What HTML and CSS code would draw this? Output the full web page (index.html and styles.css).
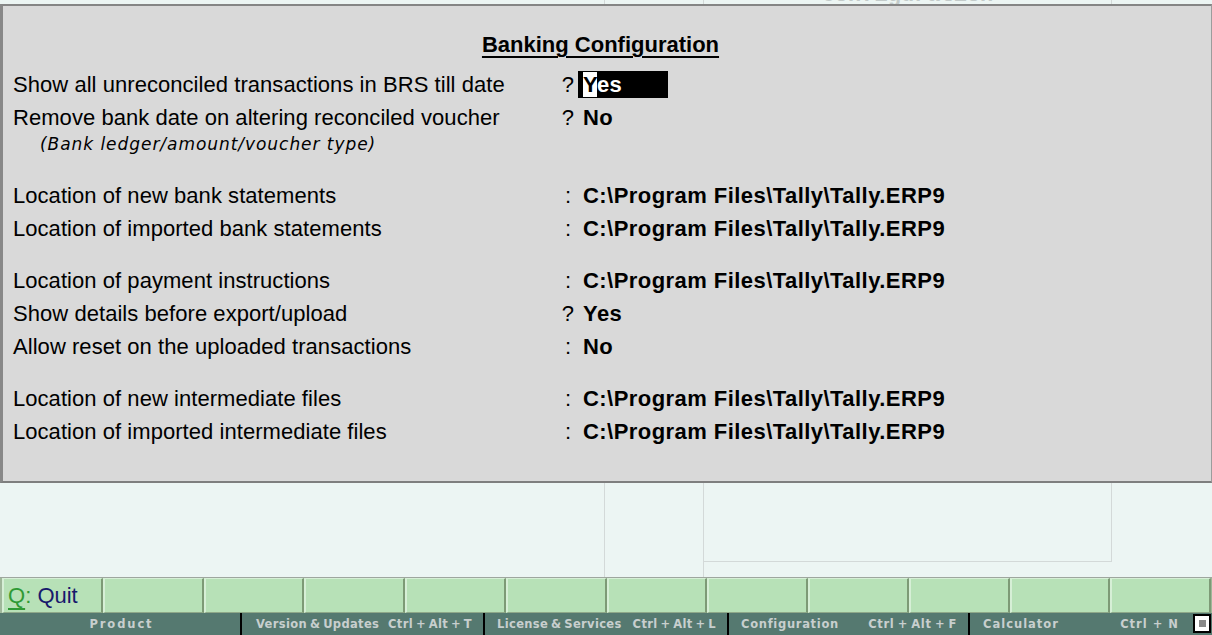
FILE: index.html
```html
<!DOCTYPE html>
<html lang="en">
<head>
<meta charset="utf-8">
<title>Banking Configuration</title>
<link rel="stylesheet" href="styles.css">
</head>
<body>
<div class="screen">
  <div class="bg-strip">
    <div class="bg-col bg-col-a"></div>
    <div class="bg-col bg-col-b"></div>
    <div class="bg-col bg-col-c"><span class="ghost-title">Configuration</span></div>
    <div class="bg-col bg-col-d"></div>
  </div>

  <div class="panel">
    <h1 class="panel-title"><span>Banking Configuration</span></h1>

    <div class="group group-first">
      <div class="row"><span class="label">Show all unreconciled transactions in BRS till date</span><span class="sep">?</span><span class="value"><span class="active"><span class="cursor">Y</span>es</span></span></div>
      <div class="row"><span class="label">Remove bank date on altering reconciled voucher</span><span class="sep">?</span><span class="value"><span>No</span></span></div>
      <div class="note">(Bank ledger/amount/voucher type)</div>
    </div>

    <div class="group">
      <div class="row"><span class="label">Location of new bank statements</span><span class="sep">:</span><span class="value"><span>C:\Program Files\Tally\Tally.ERP9</span></span></div>
      <div class="row"><span class="label">Location of imported bank statements</span><span class="sep">:</span><span class="value"><span>C:\Program Files\Tally\Tally.ERP9</span></span></div>
    </div>

    <div class="group">
      <div class="row"><span class="label">Location of payment instructions</span><span class="sep">:</span><span class="value"><span>C:\Program Files\Tally\Tally.ERP9</span></span></div>
      <div class="row"><span class="label">Show details before export/upload</span><span class="sep">?</span><span class="value"><span>Yes</span></span></div>
      <div class="row"><span class="label">Allow reset on the uploaded transactions</span><span class="sep">:</span><span class="value"><span>No</span></span></div>
    </div>

    <div class="group">
      <div class="row"><span class="label">Location of new intermediate files</span><span class="sep">:</span><span class="value"><span>C:\Program Files\Tally\Tally.ERP9</span></span></div>
      <div class="row"><span class="label">Location of imported intermediate files</span><span class="sep">:</span><span class="value"><span>C:\Program Files\Tally\Tally.ERP9</span></span></div>
    </div>
  </div>

  <div class="lower">
    <div class="bg-col bg-col-a"></div>
    <div class="bg-col bg-col-b"></div>
    <div class="bg-col bg-col-c lower-box"></div>
    <div class="bg-col bg-col-d"></div>
  </div>

  <div class="buttons">
    <div class="btn"><span class="key">Q</span><span class="colon">:</span> <span class="btn-label">Quit</span></div>
    <div class="btn"></div>
    <div class="btn"></div>
    <div class="btn"></div>
    <div class="btn"></div>
    <div class="btn"></div>
    <div class="btn"></div>
    <div class="btn"></div>
    <div class="btn"></div>
    <div class="btn"></div>
    <div class="btn"></div>
    <div class="btn"></div>
  </div>

  <div class="statusbar">
    <div class="seg seg-1"><span class="product">Product</span></div>
    <div class="seg seg-2"><span>Version &amp; Updates</span><span>Ctrl + Alt + T</span></div>
    <div class="seg seg-3"><span>License &amp; Services</span><span>Ctrl + Alt + L</span></div>
    <div class="seg seg-4"><span>Configuration</span><span>Ctrl + Alt + F</span></div>
    <div class="seg seg-5"><span>Calculator</span><span class="spacer"></span><span>Ctrl + N</span><span class="win-icon"><span></span></span></div>
  </div>
</div>
</body>
</html>
```

FILE: styles.css
```css
* {
  box-sizing: border-box;
  margin: 0;
  padding: 0;
}

html, body {
  width: 1212px;
  height: 635px;
  overflow: hidden;
}

body {
  background: #ecf5f3;
  font-family: "Liberation Sans", Arial, sans-serif;
  color: #000;
}

.screen {
  display: flex;
  flex-direction: column;
  height: 635px;
}

/* background window (behind the panel) */
.bg-strip {
  height: 4px;
  display: flex;
  overflow: hidden;
  flex: none;
}

.bg-col-a {
  width: 605px;
  border-right: 1px solid #d3d9d8;
}

.bg-col-b {
  width: 99px;
  border-right: 1px solid #d3d9d8;
}

.bg-col-c {
  width: 408px;
  border-right: 1px solid #d3d9d8;
  text-align: center;
}

.bg-col-d {
  flex: 1;
}

.ghost-title {
  display: block;
  margin-top: -15px;
  font: bold 22px/22px "Liberation Mono", monospace;
  color: #c3cbca;
}

/* main panel */
.panel {
  flex: none;
  height: 479px;
  background: #d9d9d9;
  border-top: 2px solid #858585;
  border-left: 3px solid #888888;
  border-bottom: 2px solid #7e7e7e;
  border-right: 1px solid #9c9c9c;
  padding: 22px 0 0 10px;
}

.panel-title {
  font-size: 22px;
  line-height: 33px;
  font-weight: bold;
  text-align: center;
  padding-right: 23px;
}

.panel-title span {
  text-decoration: underline;
  text-decoration-thickness: 2px;
  text-underline-offset: 4px;
}

.group + .group {
  margin-top: 19px;
}

.group-first {
  margin-top: 7px;
  padding-bottom: 6px;
}

.row {
  display: flex;
  font-size: 22px;
  line-height: 33px;
  height: 33px;
  white-space: nowrap;
  letter-spacing: 0.05px;
}

.label {
  width: 545px;
  flex: none;
}

.sep {
  width: 20px;
  flex: none;
  text-align: center;
}

.value {
  font-weight: bold;
  letter-spacing: 0.45px;
}

.value > span {
  display: inline-block;
  padding-left: 5px;
}

.value > .active {
  width: 90px;
  line-height: 27px;
  background: #000;
  color: #fff;
}

.cursor {
  background: #fff;
  color: #000;
}

.note {
  font-family: "DejaVu Sans", sans-serif;
  font-style: italic;
  font-size: 17px;
  line-height: 20px;
  letter-spacing: 0.95px;
  padding-left: 27px;
  white-space: nowrap;
}

/* area below the panel */
.lower {
  flex: none;
  height: 94px;
  display: flex;
}

.lower-box {
  height: 79px;
  border-bottom: 1px solid #d3d9d8;
}

/* button bar */
.buttons {
  flex: none;
  height: 36px;
  display: flex;
  border-top: 1px solid #9ea69e;
  padding: 0 1px 0 2px;
  background: #9fb79a;
}

.btn {
  flex: 1 1 0;
  background: #b7e1b7;
  border-top: 1px solid #d6efd6;
  border-left: 2px solid #d6efd6;
  border-right: 2px solid #7d9a76;
  border-bottom: 1px solid #8ea889;
  font-size: 22px;
  line-height: 33px;
  padding-left: 4px;
  white-space: nowrap;
}

.key {
  color: #2f9a35;
  text-decoration: underline;
  text-decoration-thickness: 2px;
  text-underline-offset: 5px;
}

.colon {
  color: #2f9a35;
}

.btn-label {
  color: #18186c;
}

/* status bar */
.statusbar {
  flex: none;
  height: 22px;
  display: flex;
  background: #557970;
  font-family: "DejaVu Sans", sans-serif;
  font-weight: bold;
  font-size: 11.5px;
  line-height: 22px;
  letter-spacing: 0.35px;
  word-spacing: -1.5px;
  color: #c8cfce;
  white-space: nowrap;
}

.seg {
  flex: none;
  display: flex;
  justify-content: space-between;
  gap: 5px;
  padding: 0 11px 0 14px;
  overflow: hidden;
}

.seg + .seg {
  border-left: 2px solid #000;
}

.seg-1 {
  width: 240px;
  justify-content: center;
}

.seg-2 {
  width: 243px;
}

.seg-3 {
  width: 244px;
  padding-left: 12px;
}

.seg-4 {
  width: 241px;
  padding-left: 12px;
  letter-spacing: 0.7px;
}

.seg-5 {
  flex: 1;
  padding-left: 13px;
  padding-right: 1px;
  justify-content: flex-start;
  gap: 0;
  letter-spacing: 1px;
  word-spacing: 0;
}

.product {
  letter-spacing: 1.9px;
}

.spacer {
  flex: 1;
}

.win-icon {
  width: 18px;
  height: 19px;
  margin: 1px 0 0 14px;
  border: 2px solid #000;
  background: #fff;
  display: flex;
  align-items: center;
  justify-content: center;
}

.win-icon span {
  width: 7px;
  height: 7px;
  background: #8a8a8a;
}
```
